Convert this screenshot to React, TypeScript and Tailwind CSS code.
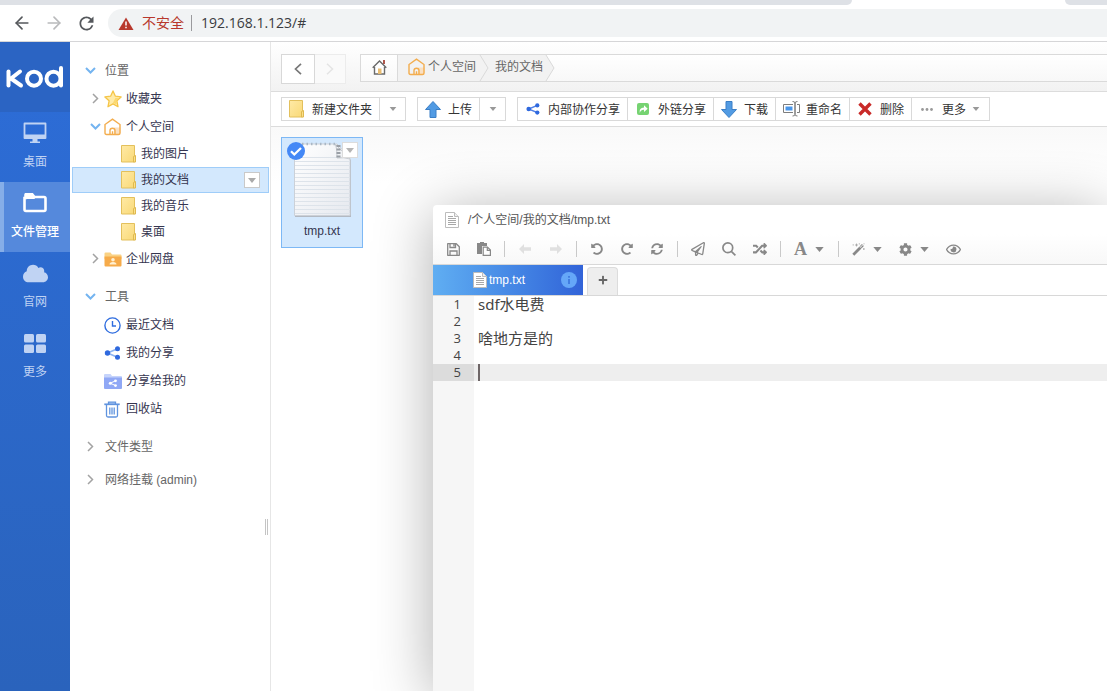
import React, { useState } from "react";
import {
  FaCloud, FaCog, FaPlus, FaRandom, FaRedoAlt,
  FaRegEye, FaRegPaperPlane, FaSyncAlt, FaUndoAlt,
} from "react-icons/fa";
import { ArrowLeft, ArrowRight } from "lucide-react";
import { MdRefresh } from "react-icons/md";

type Kids = { children: React.ReactNode };

function Caret({ className }: { className: string }) {
  return (
    <svg className={className} viewBox="0 0 10 6" aria-hidden="true">
      <path d="M0 0h10L5 6z" fill="currentColor" />
    </svg>
  );
}

function Chevron({ dir }: { dir: "down" | "right" }) {
  return dir === "down" ? (
    <svg className="h-3 w-3 shrink-0 text-[#74b4f0]" viewBox="0 0 12 12" fill="none" stroke="currentColor" strokeWidth="2">
      <path d="M1 3 5.500 7.500 10 3" />
    </svg>
  ) : (
    <svg className="h-3 w-3 shrink-0 text-[#a3a3a3]" viewBox="0 0 12 12" fill="none" stroke="currentColor" strokeWidth="1.500">
      <path d="M3 1 7.500 5.500 3 10" />
    </svg>
  );
}

function FolderIcon() {
  return (
    <svg className="h-[18px] w-4 shrink-0" viewBox="0 0 16 18">
      <defs>
        <linearGradient id="folder" x1="0" y1="0" x2="1" y2="1">
          <stop offset="0" stopColor="#ffeaa6" />
          <stop offset="1" stopColor="#f9d977" />
        </linearGradient>
      </defs>
      <path d="M.5.500h13v16.500H.5z" fill="url(#folder)" stroke="#e3c05c" />
      <path d="M12.500 17v-5.500l2-1V17z" fill="#fbe08a" stroke="#dfb94f" />
    </svg>
  );
}

function HomeBadge() {
  return (
    <svg className="h-[18px] w-[17px] shrink-0" viewBox="0 0 17 18" fill="none" stroke="#f3ad4e" strokeWidth="1.400">
      <path d="M10 9.500h6.500V15q0 1.500-1.500 1.500h-5z" fill="#fae0c2" stroke="none" />
      <path d="M2.500 16.500Q1 16.500 1 15V6.500L8.500 1.200 16 6.500V15q0 1.500-1.500 1.500z" />
      <path d="M6 16.500v-4q0-2.300 2.500-2.300T11 12.500v4M8.500 16.500v-3.300" />
    </svg>
  );
}

function StarIcon() {
  return (
    <svg className="h-[18px] w-[18px] shrink-0" viewBox="0 0 18 18">
      <path d="m9 .9 2.400 5.300 5.700.7-4.200 3.900 1.100 5.900L9 13.900 4 16.700l1.100-5.900L.9 6.900l5.700-.7z" fill="#ffeba8" stroke="#f5c548" strokeWidth="1.300" strokeLinejoin="round" />
      <path d="M11.500 7.800 14.500 8l-2.700 2.600.7 4L9 12.800z" fill="#fbd86f" />
    </svg>
  );
}

function TeamFolder() {
  return (
    <svg className="h-[15px] w-[18px] shrink-0" viewBox="0 0 18 15">
      <path d="M.5 1.500Q.5.500 1.500.500h5l1.500 2h8.500q1 0 1 1V7H.5z" fill="#fad284" />
      <path d="M.5 4.500h17v9q0 1-1 1h-15q-1 0-1-1z" fill="#f6ab4a" />
      <circle cx="9" cy="7.700" r="1.800" fill="#fff0d2" />
      <path d="M5.500 12.500q0-2.600 3.500-2.600t3.500 2.600z" fill="#fff0d2" />
    </svg>
  );
}

function ClockIcon() {
  return (
    <svg className="h-[17px] w-[17px] shrink-0" viewBox="0 0 17 17" fill="none" stroke="#2f6ddf" strokeWidth="1.400">
      <circle cx="8.500" cy="8.500" r="7.600" />
      <path d="M8.500 4v5H12" />
    </svg>
  );
}

function ShareIcon({ line, className }: { line: string; className: string }) {
  return (
    <svg className={className} viewBox="0 0 16 14">
      <path d="M13 2.800 3 7l10 4.200" fill="none" stroke={line} strokeWidth="1.700" />
      <g fill="#2f69de">
        <circle cx="13" cy="2.800" r="2.500" />
        <circle cx="3" cy="7" r="2.700" />
        <circle cx="13" cy="11.200" r="2.500" />
      </g>
    </svg>
  );
}

function SharedFolder() {
  return (
    <svg className="h-[15px] w-[18px] shrink-0" viewBox="0 0 18 15">
      <path d="M0 1Q0 0 1 0h5.500L8 2h9q1 0 1 1v3H0z" fill="#c6d4fb" />
      <path d="M0 3.500h18V14q0 1-1 1H1q-1 0-1-1z" fill="#90a8f5" />
      <path d="M11.500 6.800 6.300 9.200l5.200 2.400" fill="none" stroke="#fff" />
      <g fill="#fff"><circle cx="11.500" cy="6.800" r="1.400" /><circle cx="6.300" cy="9.200" r="1.500" /><circle cx="11.500" cy="11.600" r="1.400" /></g>
    </svg>
  );
}

function TrashIcon() {
  return (
    <svg className="h-[17px] w-4 shrink-0" viewBox="0 0 16 17" fill="none" stroke="#5f93de" strokeWidth="1.300">
      <path d="M4.500 3V1.200h7V3" fill="#bdd5f5" />
      <path d="M.3 3.300h15.400" strokeWidth="1.700" />
      <path d="M2.500 4v10.500q0 1.500 1.500 1.500h8q1.500 0 1.500-1.500V4M5.800 6.500v7M8 6.500v7M10.200 6.500v7" />
    </svg>
  );
}

function DocIcon() {
  return (
    <svg className="h-4 w-[14px] shrink-0" viewBox="0 0 14 16">
      <path d="M.5.500h9l4 4v11H.5z" fill="#fff" stroke="#bcbcbc" />
      <path d="M9.500.500v4h4" fill="#eee" stroke="#bcbcbc" />
      <path d="M3 4.500h5M3 6.500h8M3 8.500h8M3 10.500h8M3 12.500h8" stroke="#a8a8a8" />
    </svg>
  );
}

function ArrowBlock({ down }: { down?: boolean }) {
  return (
    <svg className="h-[17px] w-4 shrink-0" viewBox="0 0 16 17">
      <path d={down ? "M5 .5h6v8h4.500L8 16.500.5 8.500H5z" : "M5 16.500h6v-8h4.500L8 .5.5 8.500H5z"} fill="#529be3" stroke="#3b7fc6" />
    </svg>
  );
}

function RenameIcon() {
  return (
    <svg className="h-4 w-[17px] shrink-0" viewBox="0 0 17 16" fill="none" stroke="#7d7d7d">
      <path d="M10 3.500H.5v8H10M14 3.500h2.500v8H14" />
      <path d="M9.500.500q2.500 0 2.500 1.500v11.500q0 1.500-2.500 1.500M14.500.500Q12 .5 12 2v11.500q0 1.500 2.500 1.500" />
      <path d="M2.500 5.500h7v4h-7z" fill="#4a97ea" stroke="none" />
    </svg>
  );
}

function SaveIcon() {
  return (
    <svg className="h-[13px] w-[13px]" viewBox="0 0 13 13" fill="none" stroke="currentColor" strokeWidth="1.300">
      <path d="M.7.7h8.600l3 3v8.600H.7z" strokeLinejoin="round" />
      <path d="M3 .7v3.800h5.500V.7M3 12.300V8h7v4.300" />
      <path d="M6.300 1h1.400v2.600H6.300z" fill="currentColor" stroke="none" />
    </svg>
  );
}

function PasteIcon() {
  return (
    <svg className="h-[14px] w-[14px]" viewBox="0 0 14 14" fill="currentColor">
      <path d="M0 1h3V0h4v1h3v3H5v8H0z" />
      <path d="M6.200 5.200h4.300l2.900 2.900v5.300H6.200z" fill="#fff" stroke="currentColor" strokeWidth="1.200" />
      <path d="M10.300 5.200v3.100h3.100" fill="none" stroke="currentColor" strokeWidth="1.200" />
    </svg>
  );
}

function WandIcon() {
  return (
    <svg className="h-[13px] w-[13px]" viewBox="0 0 13 13" fill="none" stroke="currentColor">
      <path d="M1.300 11.700 8.500 4.500" strokeWidth="2.800" />
      <path d="m8.700 4.300 2.200-2.200" strokeWidth="2.800" />
      <path d="m8.300 4.300 2.300-2.300" stroke="#fff" strokeWidth=".9" />
      <path d="M4.500.5v3M3 2h3M1.200 1.200v1.400M7.300.2v1.300M11.800 5.200v1.600M11 6h1.700M12 .3v1" opacity=".6" />
    </svg>
  );
}

function Logo() {
  return (
    <svg className="h-6 w-[58px]" viewBox="0 0 58 24" fill="none" stroke="#fff" strokeWidth="4" strokeLinecap="round" role="img" aria-label="kod">
      <line x1="2.500" y1="6.500" x2="2.500" y2="20.500" />
      <line x1="14" y1="6.500" x2="5" y2="13.500" />
      <line x1="5" y1="13.500" x2="15" y2="20.500" />
      <circle cx="28" cy="13.700" r="7" />
      <circle cx="47.500" cy="13.700" r="7" />
      <line x1="55" y1="3" x2="55" y2="20.500" />
    </svg>
  );
}

function BrowserBar() {
  return (
    <header className="shrink-0 border-b border-[#d6d6d8] bg-white">
      <div className="flex h-[5px] overflow-hidden">
        <div className="w-[77%] rounded-br-lg bg-[#dee1e6]" />
        <div className="grow" />
        <div className="w-[42px] rounded-bl-lg bg-[#dee1e6]" />
      </div>
      <div className="flex h-9 items-center pl-3">
        <button aria-label="后退" className="flex w-8 text-[#55585c]"><ArrowLeft size={20} strokeWidth={2} /></button>
        <button aria-label="前进" className="flex w-8 text-[#b9babc]"><ArrowRight size={20} strokeWidth={2} /></button>
        <button aria-label="刷新" className="flex w-8 text-[#55585c]"><MdRefresh size={21} /></button>
        <div className="flex h-7 grow items-center rounded-l-full bg-[#f1f3f4] pl-[10px]">
          <svg className="h-[13px] w-4" viewBox="0 0 16 13">
            <path d="M8 .5 15.500 13H.5z" fill="#b8382c" />
            <path d="M8 4.500v4M8 9.700v1.600" stroke="#fff" strokeWidth="1.500" />
          </svg>
          <span className="ml-2 text-[14px] text-[#b8382c]">不安全</span>
          <span className="mx-[7px] h-4 w-px bg-[#9a9a9d]" />
          <input aria-label="地址" defaultValue="192.168.1.123/#" className="min-w-0 grow bg-transparent pl-[2px] font-['Open_Sans',sans-serif] text-[14px] text-[#3a3c40] outline-none" />
        </div>
      </div>
    </header>
  );
}

function DockItem({ label, active, children }: Kids & { label: string; active?: boolean }) {
  return (
    <a href="#" className={active
      ? "flex h-[70px] flex-col items-center border-l-4 border-[#86aee8] bg-[#5589dc] pr-1 pt-[5px] font-medium text-white"
      : "flex h-[70px] flex-col items-center pt-[5px] text-[#c0d3f3]"}>
      <span className="flex h-8 items-center">{children}</span>
      <span className="mt-[3px] h-5 whitespace-nowrap leading-5">{label}</span>
    </a>
  );
}

function Dock() {
  return (
    <nav className="w-[70px] shrink-0 bg-linear-to-b from-[#2d6dd8] to-[#2a63bc]">
      <div className="flex h-[70px] items-center justify-center bg-[#2b64c3]"><Logo /></div>
      <DockItem label="桌面">
        <svg className="h-[22px] w-6" viewBox="0 0 24 22">
          <path d="M1.500 1.500h21v14.500h-21z" fill="none" stroke="currentColor" strokeWidth="1.800" strokeLinejoin="round" />
          <path d="M1 12.500h22V16H1zM9.500 16h5v3.500H17V21H7v-1.500h2.500z" fill="currentColor" />
        </svg>
      </DockItem>
      <DockItem label="文件管理" active>
        <svg className="h-[20px] w-6" viewBox="0 0 24 20">
          <path d="M2.500 5V2q0-1 1-1H9l2.500 3H21q1.500 0 1.500 1.500v11Q22.500 18 21 18H3q-1.500 0-1.500-1.500V5z" fill="none" stroke="#fff" strokeWidth="2.600" />
          <path d="M2 2h8l2 4H2z" fill="#fff" />
        </svg>
      </DockItem>
      <DockItem label="官网"><FaCloud size={25} /></DockItem>
      <DockItem label="更多">
        <svg className="h-[19px] w-[22px]" viewBox="0 0 22 19" fill="currentColor">
          <rect width="10" height="8.500" rx="1.500" /><rect x="12" width="10" height="8.500" rx="1.500" />
          <rect y="10.500" width="10" height="8.500" rx="1.500" /><rect x="12" y="10.500" width="10" height="8.500" rx="1.500" />
        </svg>
      </DockItem>
    </nav>
  );
}

function Section({ label, dir }: { label: string; dir: "down" | "right" }) {
  return (
    <button className="flex h-7 w-full items-center gap-2 pl-[15px] text-left text-[#666]">
      <Chevron dir={dir} />
      {label}
    </button>
  );
}

function TreeRow({ label, icon, dir }: { label: string; icon: React.ReactNode; dir?: "down" | "right" }) {
  return (
    <a href="#" className="flex h-7 items-center pl-5 text-[#35354f]">
      <span className="w-[14px]">{dir && <Chevron dir={dir} />}</span>
      <span className="flex w-[22px]">{icon}</span>
      {label}
    </a>
  );
}

function Leaf({ label, selected }: { label: string; selected?: boolean }) {
  return (
    <div className={selected
      ? "ml-[2px] mr-px flex h-[26px] items-center border border-[#9fcdf9] bg-[#d3e8fd] pl-12 pr-2"
      : "ml-[3px] flex h-[26px] items-center pl-12"}>
      <a href="#" className="flex grow items-center gap-1 text-[#35354f]"><FolderIcon />{label}</a>
      {selected && (
        <button aria-label="菜单" className="flex h-4 w-4 items-center justify-center border border-[#c9c9c9] bg-white text-[#aaa]"><Caret className="h-[5px] w-2" /></button>
      )}
    </div>
  );
}

function Tree() {
  return (
    <aside className="relative w-[200px] shrink-0 bg-white pt-[15px]">
      <Section label="位置" dir="down" />
      <TreeRow label="收藏夹" dir="right" icon={<StarIcon />} />
      <TreeRow label="个人空间" dir="down" icon={<HomeBadge />} />
      <Leaf label="我的图片" />
      <Leaf label="我的文档" selected />
      <Leaf label="我的音乐" />
      <Leaf label="桌面" />
      <TreeRow label="企业网盘" dir="right" icon={<TeamFolder />} />
      <div className="mt-[10px]">
        <Section label="工具" dir="down" />
        <TreeRow label="最近文档" icon={<ClockIcon />} />
        <TreeRow label="我的分享" icon={<ShareIcon line="#8db4f2" className="h-[14px] w-[17px]" />} />
        <TreeRow label="分享给我的" icon={<SharedFolder />} />
        <TreeRow label="回收站" icon={<TrashIcon />} />
      </div>
      <div className="mt-[10px] flex flex-col gap-[5px]">
        <Section label="文件类型" dir="right" />
        <Section label="网络挂载 (admin)" dir="right" />
      </div>
      <div className="absolute right-[2px] top-[477px] h-4 w-[3px] cursor-col-resize border-x border-[#c4c4c4]" />
    </aside>
  );
}

function CrumbArrow() {
  return (
    <svg className="h-[26px] w-[10px] shrink-0" viewBox="0 0 10 26" preserveAspectRatio="none">
      <path d="M0 0h1l8 13-8 13H0z" fill="#f2f2f2" />
      <path d="m1 0 8 13-8 13" fill="none" stroke="#d9d9d9" />
    </svg>
  );
}

function PathBar() {
  return (
    <div className="flex h-[50px] shrink-0 border-b border-[#dcdcdc] bg-linear-to-b from-white to-[#f2f2f2] pl-[10px] pt-3">
      <div className="flex h-[30px]">
        <button aria-label="返回" className="flex w-[34px] items-center justify-center border border-[#d8d8d8] bg-white">
          <svg className="h-3 w-2" viewBox="0 0 8 12" fill="none" stroke="#777" strokeWidth="1.700"><path d="M7 .8 1.500 6 7 11.200" /></svg>
        </button>
        <button aria-label="前进一步" className="flex w-[31px] items-center justify-center border border-l-0 border-[#ececec] bg-[#fafafa]">
          <svg className="h-3 w-2" viewBox="0 0 8 12" fill="none" stroke="#e4e4e4" strokeWidth="1.500"><path d="M1 .8 6.500 6 1 11.200" /></svg>
        </button>
      </div>
      <nav className="ml-[14px] flex h-7 grow border border-r-0 border-[#dadada] bg-linear-to-b from-white to-[#f8f8f8] text-[#666]">
        <a href="#" aria-label="主页" className="flex w-[37px] items-center justify-center border-r border-[#dadada] pb-[2px]">
          <svg className="h-4 w-[15px]" viewBox="0 0 15 16">
            <path d="M11 1h2v4h-2z" fill="#b0574c" />
            <path d="M2.500 8v7h10V8M.7 8.700 7.500 2l6.800 6.700" fill="#fff" stroke="#6a6a6a" strokeWidth="1.400" />
            <path d="M6 9.500h3.500V15H6z" fill="#e9bd72" />
          </svg>
        </a>
        <a href="#" className="flex items-center gap-[3px] bg-[#f2f2f2] pb-[2px] pl-[10px] pr-[3px]"><HomeBadge />个人空间</a>
        <span className="flex bg-[#f2f2f2]"><CrumbArrow /></span>
        <a href="#" className="flex items-center bg-[#f2f2f2] pb-[2px] pl-[6px] pr-[2px]">我的文档</a>
        <CrumbArrow />
      </nav>
    </div>
  );
}

function Tool({ label, children, menu }: Kids & { label: string; menu?: boolean }) {
  return (
    <button className="flex items-center whitespace-nowrap px-[7px]">
      <span className="mr-[7px] flex w-4 justify-center">{children}</span>
      <span className="pt-px">{label}</span>
      {menu && <Caret className="ml-[6px] mr-[2px] h-1 w-2 text-[#999]" />}
    </button>
  );
}

function ToolGroup({ children }: Kids) {
  return <div className="flex divide-x divide-[#d9d9d9] border border-[#d9d9d9] bg-white">{children}</div>;
}

function DropButton({ label }: { label: string }) {
  return <button aria-label={label} className="flex w-[25px] items-center justify-center text-[#999]"><Caret className="h-1 w-2" /></button>;
}

function FileTools() {
  return (
    <div className="flex h-[35px] shrink-0 gap-[11px] border-b border-[#dcdcdc] bg-white px-[10px] py-[5px] text-[#333]">
      <ToolGroup>
        <Tool label="新建文件夹"><FolderIcon /></Tool>
        <DropButton label="新建选项" />
      </ToolGroup>
      <ToolGroup>
        <Tool label="上传"><ArrowBlock /></Tool>
        <DropButton label="上传选项" />
      </ToolGroup>
      <ToolGroup>
        <Tool label="内部协作分享"><ShareIcon line="#4f7fe6" className="h-3 w-[14px]" /></Tool>
        <Tool label="外链分享">
          <svg className="h-3 w-3" viewBox="0 0 12 12">
            <rect width="12" height="12" rx="2" fill="#76d372" />
            <path d="M2.800 10Q1.800 4.800 7 4.500V2.300l3.700 3.400L7 9V6.700Q3.800 6.500 2.800 10z" fill="#fff" />
          </svg>
        </Tool>
        <Tool label="下载"><ArrowBlock down /></Tool>
        <Tool label="重命名"><RenameIcon /></Tool>
        <Tool label="删除">
          <svg className="h-[14px] w-[14px]" viewBox="0 0 14 14"><path d="m1.500 1.500 11 11M12.500 1.500l-11 11" stroke="#c92a28" strokeWidth="3.400" /></svg>
        </Tool>
        <Tool label="更多" menu>
          <svg className="h-[3px] w-3" viewBox="0 0 12 3" fill="#999"><circle cx="1.500" cy="1.500" r="1.400" /><circle cx="6" cy="1.500" r="1.400" /><circle cx="10.500" cy="1.500" r="1.400" /></svg>
        </Tool>
      </ToolGroup>
    </div>
  );
}

function FileTile() {
  return (
    <div className="relative flex h-[111px] w-[82px] flex-col items-center border border-[#7db8f5] bg-[#d3e8fd] pt-1 text-[#35354f]">
      <svg className="h-[76px] w-[60px]" viewBox="0 0 60 76">
        <defs>
          <linearGradient id="page" x1="0" y1="0" x2="1" y2="1">
            <stop offset="0" stopColor="#fff" />
            <stop offset="1" stopColor="#e6e9ef" />
          </linearGradient>
          <pattern id="rules" width="4" height="4" patternUnits="userSpaceOnUse">
            <path d="M0 3.500h4" stroke="#dde3ea" />
          </pattern>
        </defs>
        <path d="M3 3h42l14 15v57H3z" fill="#b3b9c2" />
        <path d="M2.500 2H45l13 14v57.500H2.500z" fill="url(#page)" stroke="#ccd1d8" />
        <path d="M3 14h55v59H3z" fill="url(#rules)" />
        <path d="M10 2h34" stroke="#a9b7c5" strokeWidth="2.500" strokeDasharray="1.500 3" />
        <path d="M43 2q2 3 2 14 7-1 13 1z" fill="#f0f2f5" stroke="#c8ccd2" />
        <path d="M46.500 3v13" stroke="#9a9fa6" strokeWidth="4" strokeDasharray="2 1.500" />
      </svg>
      <span className="mt-[5px] leading-4">tmp.txt</span>
      <svg className="absolute left-[5px] top-1 h-[18px] w-[18px]" viewBox="0 0 18 18">
        <circle cx="9" cy="9" r="9" fill="#4488f6" /><path d="m4 9.200 3.300 3.300L14 6" fill="none" stroke="#fff" strokeWidth="2.300" />
      </svg>
      <button aria-label="文件菜单" className="absolute right-1 top-1 flex h-4 w-4 items-center justify-center border border-[#dcdcdc] bg-white text-[#b5b5b5]"><Caret className="h-[5px] w-2" /></button>
    </div>
  );
}

function EditBtn({ label, children, faded }: Kids & { label: string; faded?: boolean }) {
  return <button aria-label={label} className={faded ? "flex h-7 w-[30px] items-center justify-center text-[#e0e0e0]" : "flex h-7 w-[30px] items-center justify-center text-[#888]"}>{children}</button>;
}

function EditMenu({ label, children }: Kids & { label: string }) {
  return (
    <button aria-label={label} className="flex h-7 w-[47px] items-center gap-2 pl-2 text-[#888]">
      <span className="flex w-[13px] justify-center">{children}</span>
      <Caret className="h-[5px] w-[9px]" />
    </button>
  );
}

function Sep() {
  return <span className="mx-[5px] h-4 w-px shrink-0 bg-[#c9c9c9]" />;
}

function SmallArrow({ flip }: { flip?: boolean }) {
  return (
    <svg className="h-[10px] w-3" viewBox="0 0 12 10" fill="currentColor">
      <path d={flip ? "M12 5 7 0v3.300H0v3.400h7V10z" : "M0 5l5-5v3.300h7v3.400H5V10z"} />
    </svg>
  );
}

function Editor() {
  const [text, setText] = useState("sdf水电费\n\n啥地方是的\n\n");
  const lines = text.split("\n");
  return (
    <section className="absolute bottom-0 left-[162px] right-0 top-[163px] flex flex-col rounded-tl bg-white shadow-[0_8px_60px_rgba(0,0,0,0.32)]">
      <h1 className="flex h-[29px] shrink-0 items-center gap-[9px] pl-3 text-[#555]">
        <DocIcon />
        /个人空间/我的文档/tmp.txt
      </h1>
      <div className="flex h-[31px] shrink-0 items-center overflow-hidden border-b border-[#d8d8d8] bg-linear-to-b from-white to-[#f8f8f8] pl-[5px]">
        <div className="flex gap-px">
          <EditBtn label="保存"><SaveIcon /></EditBtn>
          <EditBtn label="全部保存"><PasteIcon /></EditBtn>
        </div>
        <Sep />
        <div className="flex gap-px">
          <EditBtn label="上一处" faded><SmallArrow /></EditBtn>
          <EditBtn label="下一处" faded><SmallArrow flip /></EditBtn>
        </div>
        <Sep />
        <div className="flex">
          <EditBtn label="撤销"><FaUndoAlt size={12} /></EditBtn>
          <EditBtn label="重做"><FaRedoAlt size={12} /></EditBtn>
          <EditBtn label="刷新文件"><FaSyncAlt size={12} /></EditBtn>
        </div>
        <Sep />
        <div className="flex gap-px">
          <EditBtn label="预览"><FaRegPaperPlane size={14} /></EditBtn>
          <EditBtn label="搜索">
            <svg className="h-[14px] w-[14px]" viewBox="0 0 14 14" fill="none" stroke="currentColor" strokeWidth="1.700"><circle cx="5.800" cy="5.800" r="4.900" /><path d="m9.300 9.300 4.100 4.100" /></svg>
          </EditBtn>
          <EditBtn label="替换"><FaRandom size={14} /></EditBtn>
        </div>
        <Sep />
        <EditMenu label="字体"><span className="font-['Liberation_Serif',serif] text-[18px] font-bold leading-4">A</span></EditMenu>
        <Sep />
        <EditMenu label="工具箱"><WandIcon /></EditMenu>
        <EditMenu label="设置"><FaCog size={13} /></EditMenu>
        <EditBtn label="查看"><FaRegEye size={15} /></EditBtn>
      </div>
      <div className="flex h-[31px] shrink-0 border-b border-[#d8d8d8]">
        <button className="flex w-[150px] items-center bg-linear-to-r from-[#60aef2] to-[#3263d8] pl-10 pr-[6px] font-medium text-white">
          <DocIcon />
          <span className="ml-[2px] grow text-left">tmp.txt</span>
          <svg className="h-4 w-4" viewBox="0 0 16 16">
            <circle cx="8" cy="8" r="8" fill="#65a7f8" />
            <path d="M8 4v1.800M8 7v5" stroke="#3873dc" strokeWidth="1.600" />
          </svg>
        </button>
        <button aria-label="新建标签" className="ml-1 mt-[2px] flex w-[31px] items-center justify-center rounded-t border border-b-0 border-[#dcdcdc] bg-[#eee] pb-1 text-[#666]"><FaPlus size={10} /></button>
      </div>
      <div className="flex grow">
        <div className="w-[41px] shrink-0 bg-[#f6f6f6] text-right font-['Open_Sans',sans-serif] text-[13px] leading-[17px] text-[#444]">
          {lines.map((_, i) => (
            <div key={i} className={i === lines.length - 1 ? "bg-[#dcdcdc] pr-[13px]" : "pr-[13px]"}>{i + 1}</div>
          ))}
        </div>
        <div className="relative grow">
          <div className="absolute inset-x-0 top-[68px] h-[17px] bg-[#eee]">
            <div className="ml-1 h-full w-[2px] bg-[#6e6667]" />
          </div>
          <textarea aria-label="文件内容" spellCheck={false} value={text} onChange={(e) => setText(e.target.value)}
            className="relative block h-full w-full resize-none bg-transparent pl-1 font-['Noto_Sans','Noto_Sans_CJK_SC',sans-serif] text-[15px] leading-[17px] text-[#444] outline-none" />
        </div>
      </div>
    </section>
  );
}

export default function App() {
  return (
    <div className="flex h-screen flex-col overflow-hidden bg-white font-['Liberation_Sans','Noto_Sans_CJK_SC',sans-serif] text-[12px] leading-4">
      <BrowserBar />
      <div className="flex min-h-0 grow">
        <Dock />
        <Tree />
        <main className="relative flex min-w-0 grow flex-col overflow-hidden border-l border-[#e6e6e6]">
          <PathBar />
          <FileTools />
          <div className="grow bg-linear-to-b from-[#f9f9f9] to-white to-10% p-[10px]">
            <FileTile />
          </div>
          <Editor />
        </main>
      </div>
    </div>
  );
}
